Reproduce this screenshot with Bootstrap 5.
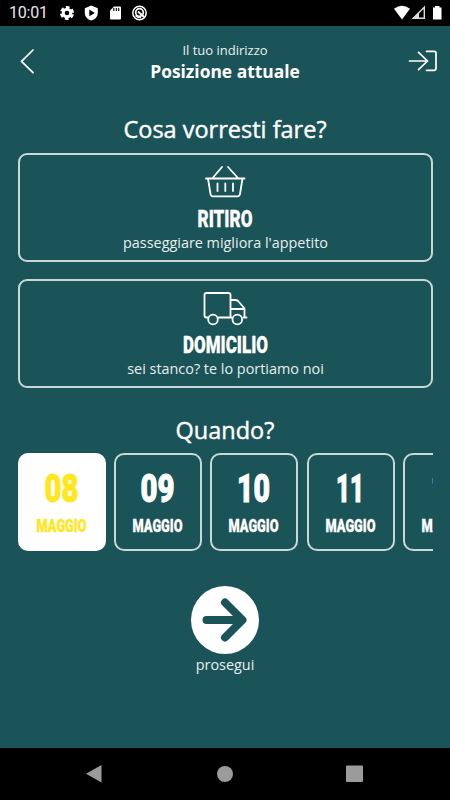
<!DOCTYPE html>
<html lang="it">
<head>
<meta charset="utf-8">
<meta name="viewport" content="width=device-width, initial-scale=1">
<title>Posizione attuale</title>
<link href="https://cdn.jsdelivr.net/npm/bootstrap@5.3.0/dist/css/bootstrap.min.css" rel="stylesheet">
<style>
body{font-family:"Open Sans","Noto Sans",sans-serif;background:#1b5458;color:#fff;height:800px;line-height:1.2}
svg{display:block;flex:none;overflow:visible}
.statusbar{height:26px;background:#000;padding:0 9px}
.clock{font:16px/26px Roboto,sans-serif;width:50px;letter-spacing:-.2px;color:#e8e8e8}
.topbar{height:89px;padding:0 13px 0 20px}
.titles{padding:15px 7px 0 0}
.addr{font-size:13px;line-height:18px;color:#e9efef}
.place{font-size:17.4px;line-height:24px;font-weight:700}
.heading{font-size:23.5px;line-height:28px;font-weight:500;-webkit-text-stroke:.4px #fff}
.choices{gap:17px;margin:10px 17px 0 18px}
.choice{height:109px;border:2px solid #c9d7d8;border-radius:9px;color:#fff;background:none}
.hint{font-size:14.4px;line-height:22px;color:#e8eeee}
.when{margin-top:28px}
.days{gap:8.2px;margin:9px 17px 0 18px}
.day{width:88px;height:98px;flex:none;border:2px solid #c9d7d8;border-radius:10px}
.day.active{background:#fff;border-color:#fff;color:#ffe71e}
.cond{font-family:Roboto,sans-serif;font-weight:900;fill:currentColor;stroke:currentColor;stroke-width:.3}
.num{stroke-width:1}
.proceed{margin-top:35px}
.go{width:68px;height:68px;background:#fff;color:#1b5458}
.navbtns{height:52px;background:#000}
.ln{fill:none;stroke:#fff;stroke-linecap:round;stroke-linejoin:round}
</style>
<script src="https://cdn.jsdelivr.net/npm/bootstrap@5.3.0/dist/js/bootstrap.bundle.min.js"></script>
</head>
<body class="d-flex flex-column overflow-hidden">
<div class="statusbar d-flex align-items-center">
  <span class="clock">10:01</span>
  <svg width="91" height="26" viewBox="59 0 91 26">
    <circle cx="67" cy="13" r="3.800" fill="none" stroke="#fff" stroke-width="3"/>
    <circle cx="67" cy="13" r="5.800" fill="none" stroke="#fff" stroke-width="2.400" stroke-dasharray="3.700 2.374" stroke-dashoffset="-1.200"/>
    <path d="M91.300 5.500L97.800 8.200V13C97.800 16.500 95 19.500 91.300 20.600C87.600 19.500 84.800 16.500 84.800 13V8.200Z" fill="#fff"/>
    <path d="M89.300 9.500V16.300L94.800 12.900Z" fill="#000"/>
    <path d="M114 6.500H120Q121 6.500 121 7.500V18.500Q121 19.500 120 19.500H111Q110 19.500 110 18.500V10.500Z" fill="#fff"/>
    <path d="M113.800 8V11M116.300 8V11M118.700 8V11" stroke="#000" stroke-width="1.100"/>
    <circle cx="139.500" cy="13" r="6.700" fill="none" stroke="#fff" stroke-width="1.500"/>
    <circle cx="139.500" cy="12.500" r="3.800" fill="none" stroke="#fff" stroke-width="1.700"/>
    <path d="M138 11.500L144 17" stroke="#fff" stroke-width="2"/>
    <path d="M135.500 15.500Q138 18 141 17.500" fill="none" stroke="#fff" stroke-width="1.500"/>
  </svg>
  <svg class="ms-auto" width="49" height="26" viewBox="392 0 49 26">
    <path d="M394 8.700Q402 3 410 8.700L402 19.500Z" fill="#fff"/>
    <path d="M424.300 7.200V18.300H413.200Z" fill="none" stroke="#ddd" stroke-width="1.400"/>
    <path d="M412 19L419 12V19Z" fill="#ddd"/>
    <path d="M435 6H439.500V7.500H441.500V19.500H433V7.500H435Z" fill="#fff"/>
  </svg>
</div>
<header class="topbar d-flex">
  <svg class="ln" width="29" height="70" viewBox="20 26 29 70" stroke-width="1.700"><path d="M33 50L21.500 61.300L33 72.600"/></svg>
  <div class="titles flex-fill text-center"><div class="addr">Il tuo indirizzo</div><div class="place">Posizione attuale</div></div>
  <svg class="ln" width="29" height="70" viewBox="408 26 29 70" stroke-width="1.700"><path d="M409.500 61H427.500M418.500 52.300L427.500 61L418.500 69.700M426.500 51.300H434Q436 51.300 436 53.300V68.300Q436 70.300 434 70.300H426.500"/></svg>
</header>
<main class="flex-fill d-flex flex-column">
  <h1 class="heading text-center mb-0">Cosa vorresti fare?</h1>
  <div class="d-grid choices">
    <button class="choice p-0 d-flex flex-column align-items-center">
      <svg class="ln" width="230" height="77" viewBox="110.500 155 230 77" stroke-width="1.800">
        <path d="M205.500 178.500H244M207.500 178.500L210 194Q210.300 196.300 212.500 196.300H237Q239.200 196.300 239.500 194L242 178.500M212.500 177.500L221.500 167M237 177.500L227.500 167M217 183.500V191M224.800 183.500V191M232.500 183.500V191"/>
        <text class="cond" x="197" y="226.800" font-size="24" textLength="55" lengthAdjust="spacingAndGlyphs">RITIRO</text>
      </svg>
      <span class="hint">passeggiare migliora l'appetito</span>
    </button>
    <button class="choice p-0 d-flex flex-column align-items-center">
      <svg class="ln" width="230" height="77" viewBox="110.500 281 230 77" stroke-width="1.800">
        <path d="M207 317.500H206Q204 317.500 204 315.500V295Q204 293 206 293H228Q230 293 230 295V317.500H218M230 300H235Q237 300 238.500 302L244 308.500V317.500M230 309H244M230 317.500H231M243 317.500H246"/>
        <circle cx="212.500" cy="319.500" r="4.800"/><circle cx="236.800" cy="319.500" r="4.800"/>
        <text class="cond" x="182.500" y="352.700" font-size="24" textLength="85" lengthAdjust="spacingAndGlyphs">DOMICILIO</text>
      </svg>
      <span class="hint">sei stanco? te lo portiamo noi</span>
    </button>
  </div>
  <h2 class="heading text-center mb-0 when">Quando?</h2>
  <div class="days d-flex overflow-hidden">
    <div class="day active"><svg width="84" height="94" viewBox="2 2 84 94"><text class="cond num" x="26.500" y="49.200" font-size="38" textLength="34" lengthAdjust="spacingAndGlyphs">08</text><text class="cond" x="18.500" y="78.500" font-size="18" textLength="50" lengthAdjust="spacingAndGlyphs">MAGGIO</text></svg></div>
    <div class="day"><svg width="84" height="94" viewBox="2 2 84 94"><text class="cond num" x="26.500" y="49.200" font-size="38" textLength="34" lengthAdjust="spacingAndGlyphs">09</text><text class="cond" x="18.500" y="78.500" font-size="18" textLength="50" lengthAdjust="spacingAndGlyphs">MAGGIO</text></svg></div>
    <div class="day"><svg width="84" height="94" viewBox="2 2 84 94"><text class="cond num" x="27" y="49.200" font-size="38" textLength="33" lengthAdjust="spacingAndGlyphs">10</text><text class="cond" x="18.500" y="78.500" font-size="18" textLength="50" lengthAdjust="spacingAndGlyphs">MAGGIO</text></svg></div>
    <div class="day"><svg width="84" height="94" viewBox="2 2 84 94"><text class="cond num" x="29" y="49.200" font-size="38" textLength="28" lengthAdjust="spacingAndGlyphs">11</text><text class="cond" x="18.500" y="78.500" font-size="18" textLength="50" lengthAdjust="spacingAndGlyphs">MAGGIO</text></svg></div>
    <div class="day"><svg width="84" height="94" viewBox="2 2 84 94"><text class="cond num" x="28" y="49.200" font-size="38" textLength="32" lengthAdjust="spacingAndGlyphs">12</text><text class="cond" x="18.500" y="78.500" font-size="18" textLength="50" lengthAdjust="spacingAndGlyphs">MAGGIO</text></svg></div>
  </div>
  <div class="d-flex flex-column align-items-center proceed">
    <div class="go rounded-circle"><svg width="68" height="68" viewBox="191 585.500 68 68"><path d="M206.500 619.500H242M225 602L242.500 619.500L225 637" fill="none" stroke="#1b5458" stroke-width="8" stroke-linecap="round" stroke-linejoin="round"/></svg></div>
    <span class="hint">prosegui</span>
  </div>
</main>
<footer class="navbtns">
  <svg width="450" height="52" viewBox="0 748 450 52" fill="#9b9b9b"><path d="M86 773.700L101.500 765V782.500Z"/><circle cx="225" cy="774" r="8"/><rect x="346" y="765.500" width="17" height="16.500" rx="1"/></svg>
</footer>
</body>
</html>
